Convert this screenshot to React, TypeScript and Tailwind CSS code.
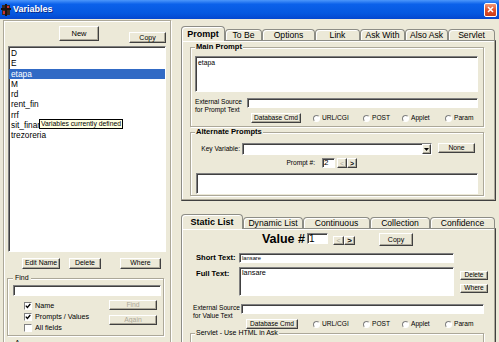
import React from "react"

type Kids = { className?: string; children?: React.ReactNode }

function Btn({ className = "", children, disabled = false }: Kids & { disabled?: boolean }) {
  return (
    <div className={`flex shrink-0 items-center justify-center border border-t-white border-l-white border-r-[#404040] border-b-[#404040] bg-[#ece9d8] leading-none shadow-[inset_-1px_-1px_0_#aca899] ${disabled ? "text-[#aca899]" : "text-black"} ${className}`}>
      {children}
    </div>
  )
}

function Field({ className = "", children }: Kids) {
  return (
    <div className={`shrink-0 border border-t-[#808080] border-l-[#808080] border-r-white border-b-white bg-white shadow-[inset_1px_1px_0_#404040] ${className}`}>
      {children}
    </div>
  )
}

function Radio({ label, className = "" }: { label: string; className?: string }) {
  return (
    <div className={`flex shrink-0 items-center gap-[2px] text-[6.6px] leading-none ${className}`}>
      <span className="h-[7px] w-[7px] rounded-full border border-t-[#808080] border-l-[#808080] border-r-white border-b-white bg-white" />
      {label}
    </div>
  )
}

function Check({ checked = false, label }: { checked?: boolean; label: string }) {
  return (
    <div className="flex h-[11px] items-center gap-[3px] text-[7.2px] leading-none">
      <span className="flex h-[8px] w-[8px] items-center justify-center border border-t-[#808080] border-l-[#808080] border-r-white border-b-white bg-white">
        {checked && (
          <svg width="6" height="6" viewBox="0 0 6 6">
            <path d="M0.8 2.6 L2.4 4.4 L5.3 1" stroke="#000" strokeWidth="1.3" fill="none" />
          </svg>
        )}
      </span>
      {label}
    </div>
  )
}

function Group({ label, bold = false, className = "", children }: Kids & { label: string; bold?: boolean }) {
  return (
    <fieldset className={`shrink-0 border border-[#aca899] pl-[4px] shadow-[inset_1px_1px_0_#fff,1px_1px_0_#fff] ${className}`}>
      <legend className={`bg-[#ece9d8] px-[1px] leading-[8px] ${bold ? "text-[7.6px] font-bold" : "text-[7px]"}`}>{label}</legend>
      {children}
    </fieldset>
  )
}

type Tab = { label: string; w: string; sel?: boolean }

function Tabs({ tabs }: { tabs: Tab[] }) {
  return (
    <div className="flex h-[14px] items-end">
      {tabs.map((t) => (
        <div
          key={t.label}
          className={`${t.w} flex shrink-0 items-center justify-center rounded-t-[4px] border border-b-0 border-[#8d8d86] bg-[#ece9d8] leading-none shadow-[inset_1px_1px_0_#fff] ${
            t.sel ? "relative z-10 -mb-px h-[15px] text-[9px] font-bold" : "h-[11px] text-[8.6px]"
          }`}
        >
          {t.label}
        </div>
      ))}
    </div>
  )
}

const panel =
  "w-[315px] border border-t-[#8d8d86] border-l-[#8d8d86] border-r-[#404040] border-b-[#404040] bg-[#ece9d8] shadow-[inset_-1px_-1px_0_#aca899,inset_1px_1px_0_#fff]"

const vars = ["D", "E", "etapa", "M", "rd", "rent_fin", "rrf", "sit_financiara", "trezoreria"]

export default function App() {
  return (
    <div className="h-[342px] w-[499px] overflow-hidden bg-[#ece9d8] font-['Liberation_Sans',Arial,sans-serif] text-black">
      <div className="flex h-[19px] items-center bg-[linear-gradient(to_bottom,#4c97fb_0%,#0b61ea_22%,#0558e0_70%,#0447cf_100%)]">
        <svg className="ml-[1px]" width="10" height="12" viewBox="0 0 10 12">
          <rect x="1" y="1" width="8" height="10" fill="#3a2a22" />
          <rect x="4" y="0" width="2" height="12" fill="#1a1210" />
          <rect x="0" y="4" width="10" height="2" fill="#1a1210" />
          <rect x="2" y="7" width="2" height="3" fill="#c33" />
          <rect x="6" y="2" width="2" height="2" fill="#c33" />
        </svg>
        <span className="ml-[2px] text-[9px] font-bold text-white [text-shadow:1px_1px_0_#0a2a8a]">Variables</span>
        <div className="ml-auto mr-[2px] flex h-[14px] w-[13px] items-center justify-center rounded-[2px] border border-white bg-[linear-gradient(to_bottom,#f29a7a,#e0502a_50%,#c93d18)]">
          <svg width="7" height="7" viewBox="0 0 7 7">
            <path d="M1 1 L6 6 M6 1 L1 6" stroke="#fff" strokeWidth="1.5" />
          </svg>
        </div>
      </div>

      <div className="flex">
        {/* left: variable list */}
        <div className="ml-[3px] mt-[1px] h-[330px] w-[168px] shrink-0 border border-[#aca899] shadow-[inset_1px_1px_0_#fff,1px_1px_0_#fff]">
          <div className="flex h-[25px] items-start">
            <Btn className="ml-[55px] mt-[5px] h-[15px] w-[40px] text-[7.5px]">New</Btn>
            <Btn className="ml-[30px] mt-[11px] h-[11px] w-[37px] text-[7px]">Copy</Btn>
          </div>
          <Field className="relative ml-[4px] h-[206px] w-[158px] pt-[1px] text-[8.3px] leading-[10.3px]">
            {vars.map((v) => (
              <div key={v} className={`pl-[2px] ${v === "etapa" ? "bg-[#316ac5] text-white" : ""}`}>
                {v}
              </div>
            ))}
            <div className="absolute left-[30px] top-[72px] h-[10px] whitespace-nowrap border border-black bg-[#ffffe1] px-[1px] text-[6.8px] leading-[8px]">
              Variables currently defined
            </div>
          </Field>
          <div className="mt-[6px] flex h-[11px] text-[6.9px]">
            <Btn className="ml-[18px] h-[11px] w-[38px]">Edit Name</Btn>
            <Btn className="ml-[9px] h-[11px] w-[32px]">Delete</Btn>
            <Btn className="ml-[19px] h-[11px] w-[41px]">Where</Btn>
          </div>
          <fieldset className="ml-[3px] mt-[5px] w-[157px] border border-[#aca899] pb-[2px] pl-[5px] shadow-[inset_1px_1px_0_#fff,1px_1px_0_#fff]">
            <legend className="bg-[#ece9d8] px-[2px] text-[7px] leading-[8px]">Find</legend>
            <Field className="mt-[3px] h-[11px] w-[148px]" />
            <div className="mt-[4px] flex">
              <div className="w-[96px] pl-[11px]">
                <Check checked label="Name" />
                <Check checked label="Prompts / Values" />
                <Check label="All fields" />
              </div>
              <div>
                <Btn disabled className="h-[10px] w-[48px] text-[6.8px]">Find</Btn>
                <Btn disabled className="mt-[5px] h-[10px] w-[48px] text-[6.8px]">Again</Btn>
              </div>
            </div>
          </fieldset>
          <fieldset className="ml-[3px] mt-[3px] h-[30px] w-[157px] border border-[#aca899] pl-[5px] shadow-[inset_1px_1px_0_#fff,1px_1px_0_#fff]">
            <legend className="bg-[#ece9d8] px-[2px] text-[7px] leading-[8px]">A</legend>
            <Btn className="ml-[96px] h-[12px] w-[48px]" />
          </fieldset>
        </div>

        {/* right: prompt + value tabs */}
        <div className="ml-[10px] w-[315px] shrink-0">
          <div className="mt-[7px]">
            <Tabs
              tabs={[
                { label: "Prompt", w: "w-[44px]", sel: true },
                { label: "To Be", w: "w-[37px]" },
                { label: "Options", w: "w-[53px]" },
                { label: "Link", w: "w-[45px]" },
                { label: "Ask With", w: "w-[45px]" },
                { label: "Also Ask", w: "w-[43px]" },
                { label: "Servlet", w: "w-[47px]" },
              ]}
            />
          </div>
          <div className={`${panel} h-[161px]`}>
            <Group label="Main Prompt" bold className="ml-[8px] mt-[2px] h-[84px] w-[294px]">
              <Field className="mt-[5px] h-[36px] w-[283px] pl-[2px] pt-[3px] text-[6.8px] leading-none">etapa</Field>
              <div className="mt-[5px] flex h-[16px]">
                <div className="w-[52px] pt-[1px] text-[6.6px] leading-[7.5px]">
                  External Source
                  <br />
                  for Prompt Text
                </div>
                <Field className="mt-[1px] h-[10px] w-[231px]" />
              </div>
              <div className="flex h-[10px] items-center">
                <Btn className="ml-[56px] h-[10px] w-[50px] text-[6.6px]">Database Cmd</Btn>
                <Radio label="URL/CGI" className="ml-[12px] w-[50px]" />
                <Radio label="POST" className="w-[39px]" />
                <Radio label="Applet" className="w-[43px]" />
                <Radio label="Param" />
              </div>
            </Group>
            <Group label="Alternate Prompts" bold className="ml-[8px] mt-[1px] h-[68px] w-[294px]">
              <div className="mt-[7px] flex h-[12px] items-start">
                <div className="w-[45px] pt-[3px] text-right text-[6.6px] leading-none">Key Variable:</div>
                <Field className="ml-[2px] flex h-[12px] w-[190px] justify-end">
                  <Btn className="h-full w-[9px]">
                    <svg width="5" height="3" viewBox="0 0 5 3">
                      <path d="M0 0 H5 L2.5 3 Z" fill="#000" />
                    </svg>
                  </Btn>
                </Field>
                <Btn className="ml-[6px] h-[10px] w-[37px] text-[6.8px]">None</Btn>
              </div>
              <div className="mt-[3px] flex h-[10px] items-center">
                <div className="w-[120px] text-right text-[6.6px] leading-none">Prompt #:</div>
                <Field className="ml-[7px] h-[10px] w-[13px] pl-[1px] text-[8px] leading-[8px]">2</Field>
                <Btn disabled className="ml-[2px] h-[10px] w-[10px] text-[7px]">&lt;</Btn>
                <Btn className="h-[10px] w-[10px] text-[7px] font-bold">&gt;</Btn>
              </div>
              <Field className="ml-[1px] mt-[5px] h-[21px] w-[282px]" />
            </Group>
          </div>

          <div className="mt-[13px]">
            <Tabs
              tabs={[
                { label: "Static List", w: "w-[62px]", sel: true },
                { label: "Dynamic List", w: "w-[60px]" },
                { label: "Continuous", w: "w-[67px]" },
                { label: "Collection", w: "w-[60px]" },
                { label: "Confidence", w: "w-[65px]" },
              ]}
            />
          </div>
          <div className={`${panel} h-[120px]`}>
            <div className="mt-[4px] flex h-[13px] items-start">
              <div className="w-[123px] text-right text-[12.5px] font-bold leading-[13px]">Value #</div>
              <Field className="ml-[2px] h-[11px] w-[21px] pl-[1px] text-[10px] leading-[10px]">1</Field>
              <Btn disabled className="ml-[5px] mt-[3px] h-[9px] w-[11px] text-[7px]">&lt;</Btn>
              <Btn className="mt-[3px] h-[9px] w-[11px] text-[8px] font-bold">&gt;</Btn>
              <Btn className="ml-[24px] h-[13px] w-[34px] text-[7px]">Copy</Btn>
            </div>
            <div className="mt-[7px] flex h-[10px] items-center">
              <div className="ml-[14px] w-[43px] text-[7.6px] font-bold leading-none">Short Text:</div>
              <Field className="h-[10px] w-[215px] pl-[2px] text-[5.8px] leading-[8px]">lansare</Field>
            </div>
            <div className="mt-[4px] flex">
              <div className="ml-[14px] mt-[3px] w-[43px] text-[7.6px] font-bold leading-[8px]">Full Text:</div>
              <Field className="h-[29px] w-[215px] pl-[2px] pt-[1px] text-[7.3px] leading-[8px]">lansare</Field>
              <div className="ml-[6px]">
                <Btn className="mt-[4px] h-[9px] w-[28px] text-[6.6px]">Delete</Btn>
                <Btn className="mt-[4px] h-[9px] w-[28px] text-[6.6px]">Where</Btn>
              </div>
            </div>
            <div className="mt-[8px] flex h-[15px]">
              <div className="ml-[11px] w-[48px] text-[6.6px] leading-[7.5px]">
                External Source
                <br />
                for Value Text
              </div>
              <Field className="h-[10px] w-[243px]" />
            </div>
            <div className="flex h-[10px] items-center">
              <Btn className="ml-[64px] h-[10px] w-[52px] text-[6.6px]">Database Cmd</Btn>
              <Radio label="URL/CGI" className="ml-[15px] w-[50px]" />
              <Radio label="POST" className="w-[39px]" />
              <Radio label="Applet" className="w-[43px]" />
              <Radio label="Param" />
            </div>
            <Group label="Servlet - Use HTML in Ask" className="ml-[8px] h-[30px] w-[294px]" />
          </div>
        </div>
      </div>
    </div>
  )
}
